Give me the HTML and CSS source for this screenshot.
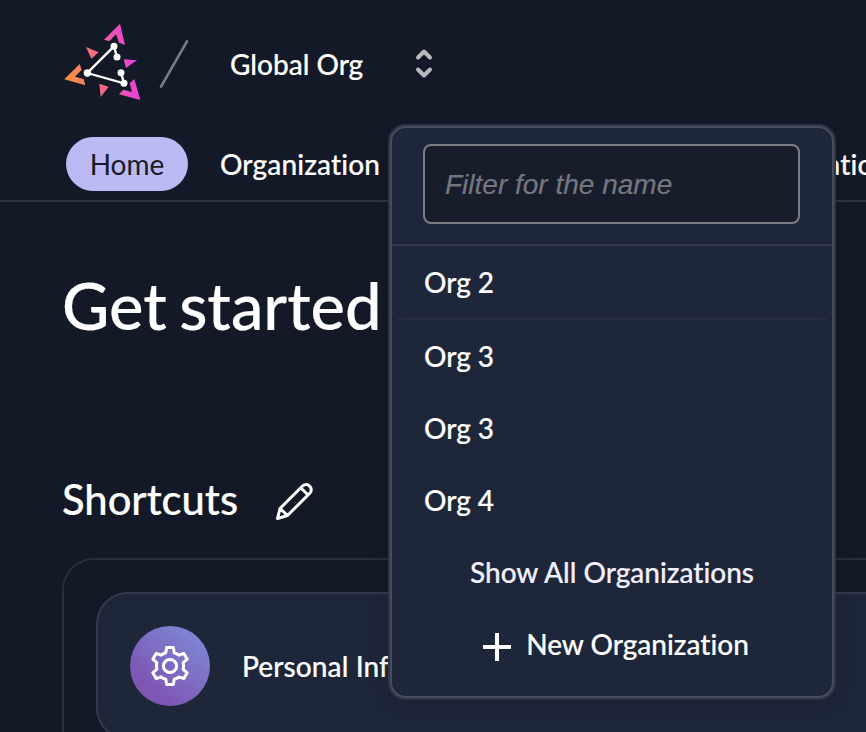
FILE: index.html
```html
<!DOCTYPE html>
<html lang="en">
<head>
<meta charset="utf-8">
<title>Console</title>
<link rel="stylesheet" href="styles.css">
</head>
<body>
<header class="header">
  <div class="topbar">
    <svg class="logo" viewBox="30 30 255 252" aria-hidden="true">
      <defs>
        <linearGradient id="brand" gradientUnits="userSpaceOnUse" x1="43" y1="200" x2="260" y2="165">
          <stop offset="0" stop-color="#f6923c"/>
          <stop offset=".3" stop-color="#f27a66"/>
          <stop offset=".55" stop-color="#f06292"/>
          <stop offset="1" stop-color="#e83fe0"/>
        </linearGradient>
      </defs>
      <g fill="url(#brand)">
        <path d="M210 41 225 105 207 98 198 73 178 94 162 89Z"/>
        <path d="M43 208 89 162 95 180 75 200 101 207 106 226Z"/>
        <path d="M271 270 207 253 220 239 246 246 239 220 253 207Z"/>
        <path d="M108 111 146 127 124 146Z"/>
        <path d="M221 148 261 151 228 174Z"/>
        <path d="M148 221 176 230 152 261Z"/>
      </g>
      <path d="M201 141 192 109 112 189 222 220 213 188" fill="none" stroke="#fff" stroke-width="7"/>
      <g fill="#fff">
        <circle cx="192" cy="109" r="10.5"/><circle cx="201" cy="141" r="10.5"/>
        <circle cx="112" cy="189" r="11"/><circle cx="222" cy="220" r="10.5"/><circle cx="213" cy="188" r="10.5"/>
      </g>
    </svg>
    <svg class="slash" viewBox="315 75 120 180" aria-hidden="true"><path d="M333 230 411 94"/></svg>
    <span class="org-name">Global Org</span>
    <svg class="selector" viewBox="0 0 20 32" aria-hidden="true"><path d="M4 9.500 10 3.500 16 9.500M4 21.500 10 27.500 16 21.500"/></svg>
  </div>
  <nav class="nav">
    <a class="tab active">Home</a>
    <a class="tab">Organization</a>
    <a class="tab last">Authorizations</a>
  </nav>
</header>
<main class="main">
  <h1>Get started</h1>
  <div class="section-title">
    <h2>Shortcuts</h2>
    <svg class="pencil" viewBox="0 0 40 40" aria-hidden="true">
      <path d="M3.500 36.500 6 26.500 28.500 4C34 0 39.500 6 36 11L13.500 33.500ZM27 6 34 13M6 26.500 13.500 33.500"/>
    </svg>
  </div>
  <div class="shortcuts">
    <div class="card">
      <span class="badge">
        <svg viewBox="0 0 40 40" aria-hidden="true">
          <path d="M16.700 1.500H23.300L24.200 6.700Q27 7.500 28.900 9.200L33.800 7.400 37.200 13.200 33.200 16.600Q33.900 20 33.200 23.400L37.200 26.800 33.800 32.600 28.900 30.800Q27 32.500 24.200 33.300L23.300 38.500H16.700L15.800 33.300Q13 32.500 11.100 30.800L6.200 32.600 2.800 26.800 6.800 23.400Q6.100 20 6.800 16.600L2.800 13.200 6.200 7.400 11.100 9.200Q13 7.500 15.800 6.700Z"/>
          <circle cx="20" cy="20" r="6.600"/>
        </svg>
      </span>
      <span class="card-label">Personal Information</span>
    </div>
  </div>
</main>
<div class="menu">
  <div class="filter"><input type="text" placeholder="Filter for the name" aria-label="Filter for the name"></div>
  <div class="item pinned">Org 2</div>
  <div class="item">Org 3</div>
  <div class="item">Org 3</div>
  <div class="item">Org 4</div>
  <div class="item action all">Show All Organizations</div>
  <div class="item action">
    <svg class="plus" viewBox="0 0 28 28" aria-hidden="true"><path d="M14 0V28M0 14H28"/></svg>
    <span>New Organization</span>
  </div>
</div>
</body>
</html>
```
FILE: styles.css
```css
* { box-sizing: border-box; }

body {
  margin: 0;
  height: 732px;
  overflow: hidden;
  position: relative;
  background: #131926;
  color: #fff;
  font: 500 28px/36px Lato, sans-serif;
  font-variant-ligatures: none;
  -webkit-text-stroke: .2px currentColor;
}

svg { display: block; flex: none; }

.header { height: 202px; border-bottom: 2px solid #303441; }

.topbar { display: flex; align-items: center; height: 130px; padding-left: 60px; }
.logo { width: 85px; height: 84px; margin-top: -6px; }
.slash { width: 40px; height: 60px; margin-left: 10px; }
.slash path { stroke: #797c83; stroke-width: 8; stroke-linecap: round; }
.org-name { width: 134px; margin: -2px 0 0 35px; white-space: nowrap; }
.selector { width: 20px; height: 32px; margin: -2px 0 0 50px; }
.selector path { fill: none; stroke: #b7b9bd; stroke-width: 4; stroke-linecap: round; stroke-linejoin: round; }

.nav { display: flex; align-items: center; height: 68px; padding-left: 66px; overflow: hidden; white-space: nowrap; }
.tab { flex: none; line-height: 54px; letter-spacing: .15px; }
.tab.active {
  width: 122px;
  margin-right: 32px;
  border-radius: 27px;
  background: #bbbaf5;
  color: #191b27;
  text-align: center;
  font-weight: 400;
  letter-spacing: 0;
  -webkit-text-stroke: 0;
}
.tab.last { margin-left: 339px; }

.main { height: 530px; padding-left: 62px; overflow: hidden; }
h1 { margin: 0; padding-top: 65px; font: 500 65px/76px Lato, sans-serif; word-spacing: -4px; }
.section-title { display: flex; align-items: center; height: 56px; margin-top: 129px; }
h2 { width: 177px; margin: -2px 0 0; font: 500 41.700px/48px Lato, sans-serif; }
.pencil { width: 40px; height: 40px; margin: 4px 0 0 35px; }
.pencil path { fill: none; stroke: #fff; stroke-width: 3; stroke-linejoin: round; }

.shortcuts {
  height: 240px;
  margin-top: 30px;
  padding: 32px 0 0 32px;
  border: 2px solid #292f3b;
  border-right: 0;
  border-radius: 32px 0 0;
}
.card {
  display: flex;
  align-items: center;
  height: 148px;
  padding-left: 32px;
  border: 2px solid #343b4d;
  border-right: 0;
  border-radius: 32px 0 0 32px;
  background: #1e263a;
}
.badge {
  display: grid;
  place-items: center;
  width: 80px;
  height: 80px;
  border-radius: 50%;
  background: linear-gradient(40deg, #7e57b4 25%, #7d89d5 90%);
}
.badge svg { width: 40px; height: 40px; }
.badge svg * { fill: none; stroke: #fff; stroke-width: 3; stroke-linejoin: round; }
.card-label { margin-left: 32px; letter-spacing: .1px; }

.menu {
  position: absolute;
  left: 390px;
  top: 126px;
  width: 444px;
  height: 572px;
  border: 2px solid #474d5e;
  border-radius: 16px;
  background: #1e263a;
  box-shadow: 0 0 0 2px #303645, 0 6px 24px rgba(0, 0, 0, .15);
}
.filter { height: 118px; padding: 16px 32px 20px 31px; border-bottom: 2px solid #343b4c; }
.filter input {
  display: block;
  width: 377px;
  height: 80px;
  padding: 1px 20px 0;
  border: 2px solid #7b7d85;
  border-radius: 8px;
  background: #181d2b;
  color: #fff;
  font: 28px "Liberation Sans", sans-serif;
}
.filter input::placeholder { color: #74777f; font-style: italic; opacity: 1; }
.item { display: flex; align-items: center; height: 72px; padding-left: 32px; white-space: nowrap; }
.item.pinned { height: 74px; border-bottom: 2px solid #272e40; border-radius: 0 0 12px 12px; }
.item.action { justify-content: center; padding: 0 0 0 8px; }
.item.all { padding: 0; color: #f2f0ff; }
.plus { width: 28px; height: 28px; margin: 6px 15px 0 0; }
.plus path { stroke: #fff; stroke-width: 4; }
```
